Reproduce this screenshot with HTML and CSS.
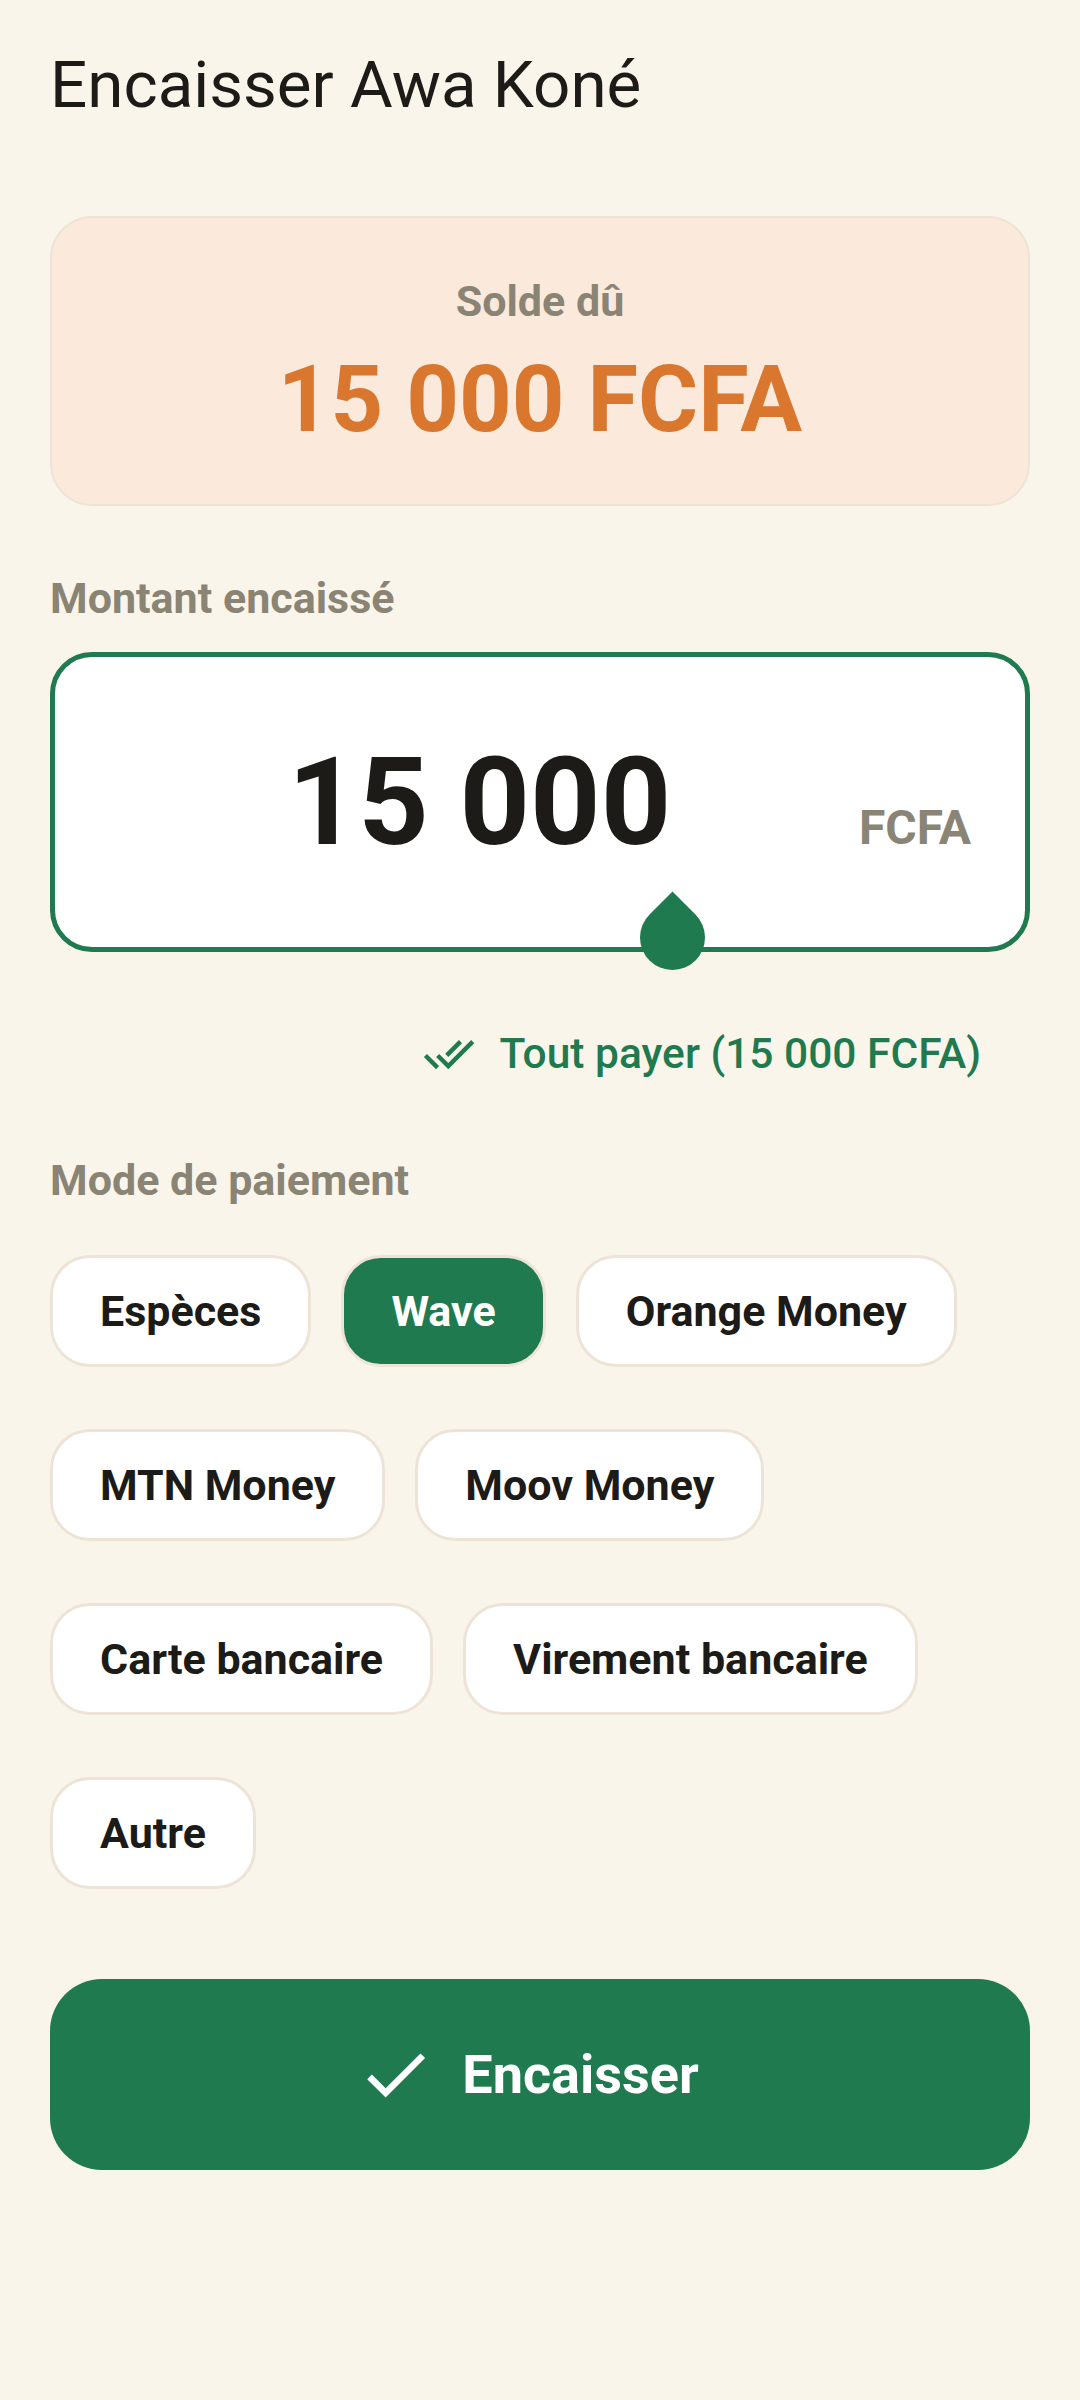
FILE: index.html
```html
<!DOCTYPE html>
<html lang="fr">
<head>
	<meta charset="utf-8">
	<title>Encaisser Awa Koné</title>
	<link rel="stylesheet" href="styles.css">
</head>
<body>
	<h1 class="title">Encaisser Awa Koné</h1>

	<div class="balance-card">
		<div class="balance-label">Solde dû</div>
		<div class="balance-amount">15 000 FCFA</div>
	</div>

	<div class="section-label amount-label">Montant encaissé</div>
	<div class="amount-field">
		<div class="amount-value">15 000</div>
		<div class="amount-suffix">FCFA</div>
		<div class="cursor-handle"></div>
	</div>

	<div class="pay-all-row">
		<button class="pay-all">
			<svg class="pay-all-icon" viewBox="0 0 24 24"><path d="M18 7l-1.41-1.41-6.34 6.34 1.41 1.41L18 7zm4.24-1.41L11.66 16.170 7.48 12l-1.41 1.41L11.66 19l12-12-1.42-1.41zM.41 13.41L6 19l1.41-1.41L1.83 12 .41 13.41z"/></svg>
			<span>Tout payer (15 000 FCFA)</span>
		</button>
	</div>

	<div class="section-label mode-label">Mode de paiement</div>
	<div class="chips">
		<button class="chip">Espèces</button>
		<button class="chip selected">Wave</button>
		<button class="chip">Orange Money</button>
		<button class="chip">MTN Money</button>
		<button class="chip">Moov Money</button>
		<button class="chip">Carte bancaire</button>
		<button class="chip">Virement bancaire</button>
		<button class="chip">Autre</button>
	</div>

	<button class="submit">
		<svg class="submit-icon" viewBox="0 0 24 24"><path d="M9 16.17L4.83 12l-1.42 1.41L9 19 21 7l-1.41-1.41z"/></svg>
		<span>Encaisser</span>
	</button>
</body>
</html>
```

FILE: styles.css
```css
body {
	font-family: Roboto, "Noto Sans", sans-serif;
	background-color: #faf5eb;
	color: #1c1b17;
	margin: 0;
	padding: 0 50px;
	width: 980px;
}
.title {
	font-size: 65.5px;
	font-weight: 400;
	line-height: 76px;
	margin: 0;
	padding-top: 47px;
}
.balance-card {
	margin-top: 93px;
	background-color: #fbe9dc;
	border: 2px solid #ede3d6;
	border-radius: 42px;
	padding: 58px 0 51px;
	text-align: center;
}
.balance-label {
	font-size: 43px;
	line-height: 50px;
	font-weight: 700;
	color: #8a8475;
}
.balance-amount {
	margin-top: 21px;
	font-size: 92px;
	line-height: 106px;
	font-weight: 700;
	color: #d9772f;
}
.section-label {
	font-size: 43px;
	line-height: 50px;
	font-weight: 700;
	color: #8a8475;
}
.amount-label {
	margin-top: 67px;
}
.amount-field {
	position: relative;
	margin-top: 29px;
	height: 290px;
	background-color: #fff;
	border: 5px solid #1f7a4f;
	border-radius: 42px;
	display: flex;
	align-items: baseline;
	align-content: center;
	flex-wrap: wrap;
	padding: 0 54px;
}
.amount-value {
	flex: 1;
	text-align: center;
	font-size: 123px;
	line-height: 140px;
	font-weight: 700;
	color: #1c1b17;
}
.amount-suffix {
	margin-left: 9px;
	font-size: 48px;
	font-weight: 700;
	color: #8a8475;
}
.cursor-handle {
	position: absolute;
	left: 585px;
	top: 248px;
	width: 65px;
	height: 65px;
	background-color: #1f7a4f;
	border-radius: 0 50% 50% 50%;
	transform: rotate(45deg);
}
.pay-all-row {
	margin-top: 76px;
	display: flex;
	justify-content: flex-end;
	padding-right: 49px;
}
.pay-all {
	display: flex;
	align-items: center;
	gap: 25px;
	background: none;
	border: none;
	padding: 0;
	font-family: inherit;
	font-size: 42.5px;
	line-height: 52px;
	font-weight: 500;
	color: #1f7a4f;
}
.pay-all-icon {
	width: 52px;
	height: 52px;
	fill: #1f7a4f;
}
.mode-label {
	margin-top: 75px;
}
.chips {
	margin-top: 50px;
	display: flex;
	flex-wrap: wrap;
	gap: 62px 30px;
}
.chip {
	height: 112px;
	padding: 0 47px;
	background-color: #fff;
	border: 3px solid #ede3d6;
	border-radius: 40px;
	font-family: inherit;
	font-size: 43px;
	font-weight: 700;
	color: #1c1b17;
}
.chip.selected {
	background-color: #1f7a4f;
	color: #fff;
}
.submit {
	margin-top: 90px;
	width: 100%;
	height: 191px;
	display: flex;
	align-items: center;
	justify-content: center;
	gap: 27px;
	background-color: #1f7a4f;
	border: none;
	border-radius: 52px;
	font-family: inherit;
	font-size: 54px;
	font-weight: 700;
	color: #fff;
	padding: 0 25px 0 0;
}
.submit-icon {
	width: 79px;
	height: 79px;
	fill: #fff;
}
```
